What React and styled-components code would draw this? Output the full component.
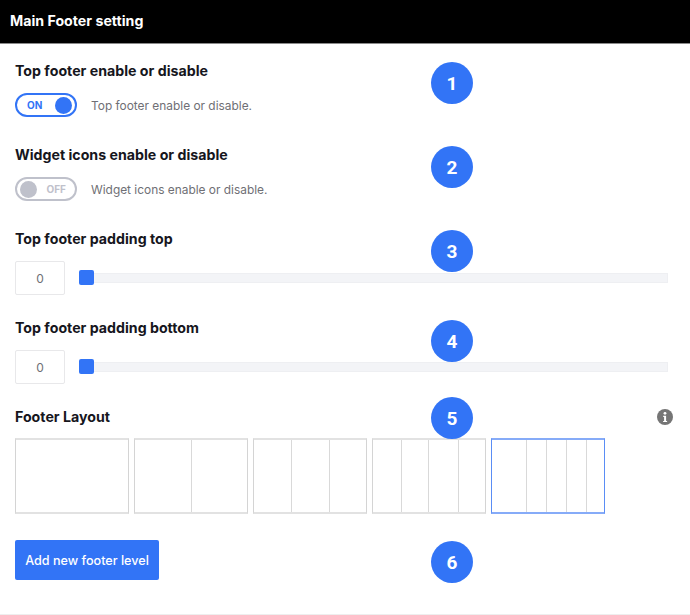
import React from "react"
import styled, { createGlobalStyle } from "styled-components"

const layouts = [
    { cols: "1fr", count: 1 },
    { cols: "56px 1fr", count: 2 },
    { cols: "37px 38px 1fr", count: 3 },
    { cols: "28px 27px 30px 1fr", count: 4 },
    { cols: "34px 20px 20px 20px 1fr", count: 5 },
]
const badges = [62, 146, 230, 320, 397, 541]

const App = () => {
    return (
        <StyledPage>
            <GlobalStyle />
            <StyledHeader>Main Footer setting</StyledHeader>
            <StyledBody>
                <StyledSection>
                    <StyledHeading>Top footer enable or disable</StyledHeading>
                    <StyledToggleRow>
                        <StyledToggle $on>
                            <span>ON</span>
                            <i />
                        </StyledToggle>
                        <StyledHint>Top footer enable or disable.</StyledHint>
                    </StyledToggleRow>
                </StyledSection>

                <StyledSection>
                    <StyledHeading>Widget icons enable or disable</StyledHeading>
                    <StyledToggleRow>
                        <StyledToggle>
                            <i />
                            <span>OFF</span>
                        </StyledToggle>
                        <StyledHint>Widget icons enable or disable.</StyledHint>
                    </StyledToggleRow>
                </StyledSection>

                <StyledSection $gap={23}>
                    <StyledHeading>Top footer padding top</StyledHeading>
                    <StyledSliderRow>
                        <StyledValue>0</StyledValue>
                        <StyledTrack><i /></StyledTrack>
                    </StyledSliderRow>
                </StyledSection>

                <StyledSection $gap={23}>
                    <StyledHeading>Top footer padding bottom</StyledHeading>
                    <StyledSliderRow>
                        <StyledValue>0</StyledValue>
                        <StyledTrack><i /></StyledTrack>
                    </StyledSliderRow>
                </StyledSection>

                <StyledSection $gap={26} $inner={11}>
                    <StyledHeadingRow>
                        <StyledHeading>Footer Layout</StyledHeading>
                        <svg width="16" height="16" viewBox="0 0 16 16">
                            <circle cx="8" cy="8" r="8" fill="#757575" />
                            <circle cx="8" cy="4.3" r="1.4" fill="#fff" />
                            <path d="M6.2 6.7h2.9v5.2h1v1.2H6.1v-1.2h1V7.9h-.9z" fill="#fff" />
                        </svg>
                    </StyledHeadingRow>
                    <StyledLayouts>
                        {layouts.map((layout, i) => (
                            <StyledLayout key={i} $cols={layout.cols} $active={i === layouts.length - 1}>
                                {Array.from({ length: layout.count }, (_, j) => (
                                    <StyledColumn key={j} />
                                ))}
                            </StyledLayout>
                        ))}
                    </StyledLayouts>
                </StyledSection>

                <StyledButton>Add new footer level</StyledButton>
            </StyledBody>

            {badges.map((top, i) => (
                <StyledBadge key={i} style={{ top }}>{i + 1}</StyledBadge>
            ))}
        </StyledPage>
    )
}

const GlobalStyle = createGlobalStyle`
    body {
        margin: 0;
        background-color: white;
        font-family: Inter, "Liberation Sans", sans-serif;
    }
`

const StyledPage = styled.div`
    position: relative;
    width: 690px;
    height: 615px;
    box-sizing: border-box;
    border-bottom: 1px solid #eeeeee;
    overflow: hidden;
`

const StyledHeader = styled.div`
    height: 43px;
    padding-left: 10px;
    line-height: 42px;
    font-size: 14.2px;
    font-weight: 700;
    color: white;
    background-color: black;
    border-bottom: 1px solid #8a8a8a;
`

const StyledBody = styled.div`
    padding: 17px 17px 0 15px;
`

const StyledSection = styled.div`
    display: flex;
    flex-direction: column;
    gap: ${(p) => p.$inner || 12}px;
    margin-bottom: ${(p) => p.$gap || 28}px;
`

const StyledHeading = styled.h4`
    margin: 0;
    font-size: 14.2px;
    line-height: 20px;
    font-weight: 700;
    color: #16161d;
`

const StyledHeadingRow = styled.div`
    display: flex;
    justify-content: space-between;
    align-items: center;
`

const StyledToggleRow = styled.div`
    display: flex;
    align-items: center;
    gap: 14px;
`

const StyledToggle = styled.div`
    display: flex;
    justify-content: space-between;
    align-items: center;
    box-sizing: border-box;
    width: 62px;
    height: 24px;
    padding: 0 3px 0 ${(p) => (p.$on ? 10 : 3)}px;
    border: 2px solid ${(p) => (p.$on ? "#3274f6" : "#bfc1cb")};
    border-radius: 12px;

    span {
        margin-right: ${(p) => (p.$on ? 0 : 6)}px;
        font-size: 10px;
        font-weight: 700;
        color: ${(p) => (p.$on ? "#3274f6" : "#bfc1cb")};
    }

    i {
        width: 17px;
        height: 17px;
        border-radius: 50%;
        background-color: ${(p) => (p.$on ? "#3274f6" : "#bfc1cb")};
    }
`

const StyledHint = styled.span`
    font-size: 11.9px;
    color: #6f6f75;
`

const StyledSliderRow = styled.div`
    display: flex;
    align-items: center;
    gap: 14px;
    padding-right: 5px;
`

const StyledValue = styled.div`
    box-sizing: border-box;
    width: 50px;
    height: 34px;
    line-height: 34px;
    text-align: center;
    font-size: 12px;
    color: #6f6f75;
    border: 1px solid #e8e8ea;
    border-radius: 2px;
`

const StyledTrack = styled.div`
    position: relative;
    flex: 1;
    height: 10px;
    background-color: #f3f4f7;
    border: 1px solid #eeeff2;
    box-sizing: border-box;

    i {
        position: absolute;
        left: -1px;
        top: -4px;
        width: 15px;
        height: 15px;
        border-radius: 2px;
        background-color: #3274f6;
    }
`

const StyledLayouts = styled.div`
    display: flex;
    gap: 5px;
`

const StyledLayout = styled.div`
    display: grid;
    grid-template-columns: ${(p) => p.$cols};
    box-sizing: border-box;
    width: 114px;
    height: 76px;
    border-style: solid;
    border-width: 2px 1px;
    border-color: ${(p) => (p.$active ? "#86abf8 #5a8df5" : "#e2e2e2 #d4d4d4")};
`

const StyledColumn = styled.div`
    border-left: 1px solid #d9d9d9;

    &:first-child {
        border-left: 0;
    }
`

const StyledButton = styled.button`
    display: block;
    width: 144px;
    height: 40px;
    padding: 0;
    font-family: inherit;
    font-size: 12.6px;
    font-weight: 500;
    color: white;
    background-color: #3274f6;
    border: 0;
    border-radius: 2px;
`

const StyledBadge = styled.div`
    position: absolute;
    left: 431px;
    width: 42px;
    height: 42px;
    line-height: 43px;
    text-align: center;
    font-family: Roboto, sans-serif;
    font-size: 19px;
    font-weight: 700;
    color: white;
    background-color: #3274f6;
    border-radius: 50%;
`

export default App
